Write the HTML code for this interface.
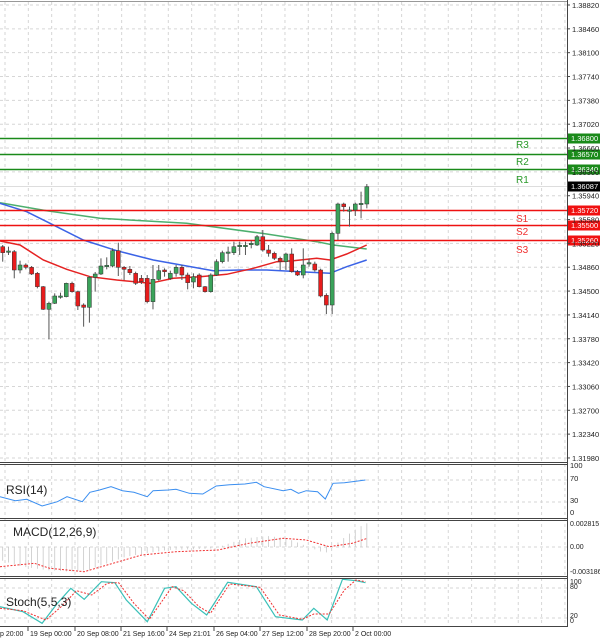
<!DOCTYPE html>
<html><head><meta charset="utf-8"><style>
html,body{margin:0;padding:0;background:#fff;}
svg{display:block;font-family:"Liberation Sans",sans-serif;}
</style></head><body>
<svg id="s" width="600" height="644" viewBox="0 0 600 644" xmlns="http://www.w3.org/2000/svg">
<rect width="600" height="644" fill="#fff"/>
<g id="grid" stroke="#d6d6d6" stroke-width="1" stroke-dasharray="3,3"></g>
<g id="main"></g>
<g id="ind"></g>
<g id="frame" fill="none" stroke="#444" stroke-width="1">
<line x1="567.5" y1="0" x2="567.5" y2="627"/>
<line x1="0" y1="462.5" x2="567" y2="462.5"/><line x1="0" y1="464.5" x2="567" y2="464.5"/>
<line x1="0" y1="518.5" x2="567" y2="518.5"/><line x1="0" y1="520.5" x2="567" y2="520.5"/>
<line x1="0" y1="576.5" x2="567" y2="576.5"/><line x1="0" y1="578.5" x2="567" y2="578.5"/>
<line x1="0" y1="626.5" x2="567" y2="626.5"/>
<line x1="0" y1="1.5" x2="567" y2="1.5" stroke="#999"/>
</g>
<g id="axis" font-size="7.5" fill="#222"></g>
</svg>
<script>
var NS="http://www.w3.org/2000/svg";
function el(p,t,a,txt){var e=document.createElementNS(NS,t);for(var k in a)e.setAttribute(k,a[k]);if(txt!==undefined)e.textContent=txt;document.getElementById(p).appendChild(e);return e;}
for(var x=5;x<567;x+=23.33){el('grid','line',{x1:x,y1:2,x2:x,y2:626});}
var prices=["1.38820","1.38460","1.38100","1.37740","1.37380","1.37020","1.36660","1.36300","1.35940","1.35580","1.35220","1.34860","1.34500","1.34140","1.33780","1.33420","1.33060","1.32700","1.32340","1.31980"];
for(var i=0;i<prices.length;i++){var y=5+i*23.84;el('grid','line',{x1:0,y1:y,x2:567,y2:y});
 el('axis','line',{x1:567,y1:y,x2:570,y2:y,stroke:'#444'});el('axis','text',{x:572,y:y+3},prices[i]);}
[480,502].forEach(function(y){el('grid','line',{x1:0,y1:y,x2:567,y2:y});});
[547].forEach(function(y){el('grid','line',{x1:0,y1:y,x2:567,y2:y});});
[588,618].forEach(function(y){el('grid','line',{x1:0,y1:y,x2:567,y2:y});});
function pl(pts,col,w,dash,ox,oy,sx,sy){var d=pts.map(function(p){return (ox+p[0]/sx).toFixed(1)+","+(oy+p[1]/sy).toFixed(1)}).join(" ");
 var a={points:d,fill:'none',stroke:col,'stroke-width':w};if(dash)a['stroke-dasharray']=dash;el('main','polyline',a);}
pl([[0,68],[140,92],[300,115],[560,130],[800,162],[950,185],[1000,195],[1100,207]],'#4caf6e',1.5,null,0,180,3,3);
pl([[0,70],[80,95],[150,130],[250,180],[350,212],[460,240],[560,258],[640,272],[720,270],[800,270],[900,275],[990,280],[1040,260],[1100,240]],'#3b63e6',1.5,null,0,180,3,3);
pl([[0,183],[60,195],[130,240],[200,268],[270,290],[350,300],[450,310],[520,295],[600,290],[680,283],[760,265],[830,245],[880,242],[950,235],[990,240],[1040,222],[1100,195]],'#e52222',1.5,null,0,180,3,3);
var lv=[[138,'#1a8a1a','R3','1.36800',144],[154,'#1a8a1a','R2','1.36570',161],[169,'#1a8a1a','R1','1.36340',179],[210,'#ee1111','S1','1.35720',218],[225,'#ee1111','S2','1.35500',231],[240,'#ee1111','S3','1.35260',249]];
lv.forEach(function(l){el('main','line',{x1:0,y1:l[0]+.5,x2:567,y2:l[0]+.5,stroke:l[1],'stroke-width':1.5});
 el('main','text',{x:516,y:l[4]+4,'font-size':10,fill:l[1]==='#ee1111'?'#f03030':'#2a9a2a'},l[2]);
 el('main','rect',{x:568,y:l[0]-4.5,width:32,height:10,fill:l[1]==='#ee1111'?'#f01010':'#1a8a1a'});
 el('main','text',{x:571,y:l[0]+3,'font-size':7.5,fill:'#fff'},l[3]);});
el('main','line',{x1:0,y1:186.5,x2:567,y2:186.5,stroke:'#ddd','stroke-width':1});
el('main','rect',{x:568,y:181.5,width:32,height:10,fill:'#000'});
el('main','text',{x:571,y:189,'font-size':7.5,fill:'#fff'},'1.36087');
var c=[[200,218,195,245,'r'],[213,217,200,225,'g'],[215,270,210,295,'r'],[255,270,242,280,'g'],[255,262,250,268,'r'],[262,282,258,285,'r'],[280,320,276,325,'r'],[320,388,318,390,'r'],[370,388,365,478,'g'],[348,370,340,372,'g'],[348,352,338,356,'g'],[310,350,308,352,'g'],[310,335,305,338,'r'],[335,378,332,390,'r'],[375,382,370,440,'r'],[292,382,288,428,'g'],[282,292,276,335,'g'],[258,282,235,285,'g'],[256,260,232,268,'g'],[212,258,205,262,'g'],[212,262,188,288,'r'],[262,268,258,300,'r'],[268,278,258,285,'r'],[280,310,275,315,'r'],[295,305,285,312,'r'],[295,365,285,370,'r'],[298,365,255,388,'g'],[272,298,255,302,'g'],[270,275,265,290,'r'],[280,295,272,300,'g'],[262,280,255,290,'g'],[262,285,255,300,'r'],[285,308,278,328,'r'],[290,306,280,325,'g'],[285,320,280,322,'r'],[320,335,318,338,'r'],[285,335,280,338,'g'],[245,285,238,288,'g'],[218,245,212,250,'g'],[216,220,200,245,'g'],[200,218,185,225,'g'],[196,200,185,225,'g'],[196,200,185,225,'g'],[190,194,182,205,'g'],[170,195,165,198,'g'],[170,210,150,215,'r'],[210,220,195,230,'r'],[220,235,215,240,'r'],[235,245,230,270,'r'],[222,245,218,270,'g'],[222,275,205,278,'r'],[275,285,270,288,'r'],[255,285,205,295,'g'],[248,252,235,260,'g'],[252,270,245,275,'r'],[270,348,266,352,'r'],[346,375,340,402,'r'],[160,375,155,402,'g'],[72,160,68,180,'g'],[72,80,68,95,'r'],[90,94,80,140,'g'],[72,90,68,108,'g'],[70,74,35,115,'g'],[20,72,12,85,'g']];
c.forEach(function(k,i){var x=2.7+i*5.78;var Y=function(v){return 180+v/3};
 el('main','line',{x1:x,y1:Y(k[2]),x2:x,y2:Y(k[3]),stroke:'#555','stroke-width':1});
 var h=Math.max(1,Y(k[1])-Y(k[0]));
 el('main','rect',{x:x-2,y:Y(k[0]),width:4,height:h,fill:k[4]==='r'?'#e81c1c':'#3aa35a',stroke:'#333','stroke-width':0.5});});
var S=2.613;
function ipl(pts,col,w,dash){var d=pts.map(function(p){return (p[0]/S).toFixed(1)+","+(460+p[1]/3).toFixed(1)}).join(" ");var a={points:d,fill:'none',stroke:col,'stroke-width':w};if(dash)a['stroke-dasharray']=dash;el('ind','polyline',a);}
ipl([[0,110],[40,122],[70,118],[110,138],[150,125],[175,110],[215,125],[235,97],[260,90],[290,80],[320,92],[350,97],[385,110],[400,92],[440,90],[460,88],[495,100],[530,102],[565,78],[600,74],[640,72],[670,67],[690,80],[740,92],[760,88],[780,100],[800,92],[830,95],[850,117],[870,70],[900,68],[955,60]],'#3a8ef0',1);
el('ind','text',{x:6,y:494,'font-size':12,fill:'#222'},'RSI(14)');
[['100',468],['70',481],['30',503],['0',515]].forEach(function(t){el('ind','text',{x:570,y:t[1],'font-size':7.5,fill:'#222'},t[0]);});
var hv=[[0,300],[60,320],[120,330],[180,335],[230,330],[280,310],[330,290],[380,280],[440,270],[500,268],[560,265],[600,250],[640,235],[700,228],[750,235],[800,258],[850,280],[880,250],[920,215],[955,190]];
function interp(zx){for(var j=0;j<hv.length-1;j++){if(zx>=hv[j][0]&&zx<=hv[j+1][0]){var t=(zx-hv[j][0])/(hv[j+1][0]-hv[j][0]);return hv[j][1]+t*(hv[j+1][1]-hv[j][1]);}}return hv[hv.length-1][1];}
for(var i=0;i<64;i++){var x=2.7+i*5.78;var zy=interp(x*S);el('ind','line',{x1:x,y1:547,x2:x,y2:460+zy/3,stroke:'#c8c8c8','stroke-width':0.8});}
ipl([[0,320],[90,310],[130,325],[220,335],[280,315],[370,285],[460,275],[570,270],[650,250],[740,235],[800,240],[860,260],[920,250],[960,235]],'#f03030',1,'2,1.5');
el('ind','text',{x:13,y:536,'font-size':12,fill:'#222'},'MACD(12,26,9)');
[['0.002815',526],['0.00',549],['-0.003186',574]].forEach(function(t){el('ind','text',{x:570,y:t[1],'font-size':7,fill:'#222'},t[0]);});
ipl([[0,440],[60,455],[110,490],[150,430],[185,385],[220,418],[265,365],[300,368],[330,420],[385,485],[430,385],[460,380],[500,430],[540,465],[595,367],[670,380],[720,470],[790,480],[820,445],[855,480],[895,358],[930,362],[955,368]],'#3ac0b8',1.2);
ipl([[0,445],[60,452],[120,480],[160,440],[200,392],[240,405],[280,370],[310,368],[350,430],[390,478],[450,380],[480,392],[520,440],[550,460],[600,372],[680,382],[730,465],[790,478],[820,462],[860,462],[900,390],[930,360],[955,365]],'#f03030',1,'2,1.5');
el('ind','text',{x:6,y:606,'font-size':12,fill:'#222'},'Stoch(5,5,3)');
[['100',584],['80',589],['20',618],['0',623]].forEach(function(t){el('ind','text',{x:570,y:t[1],'font-size':7,fill:'#222'},t[0]);});
var dl=[['p 20:00',0],['19 Sep 00:00',30],['20 Sep 08:00',77],['21 Sep 16:00',123],['24 Sep 21:01',169],['26 Sep 04:00',216],['27 Sep 12:00',262],['28 Sep 20:00',309],['2 Oct 00:00',355]];
dl.forEach(function(d){el('axis','text',{x:d[1],y:636,'font-size':7},d[0]);if(d[1]>0)el('axis','line',{x1:d[1]-2,y1:627,x2:d[1]-2,y2:631,stroke:'#444'});});
</script>
</body></html>
